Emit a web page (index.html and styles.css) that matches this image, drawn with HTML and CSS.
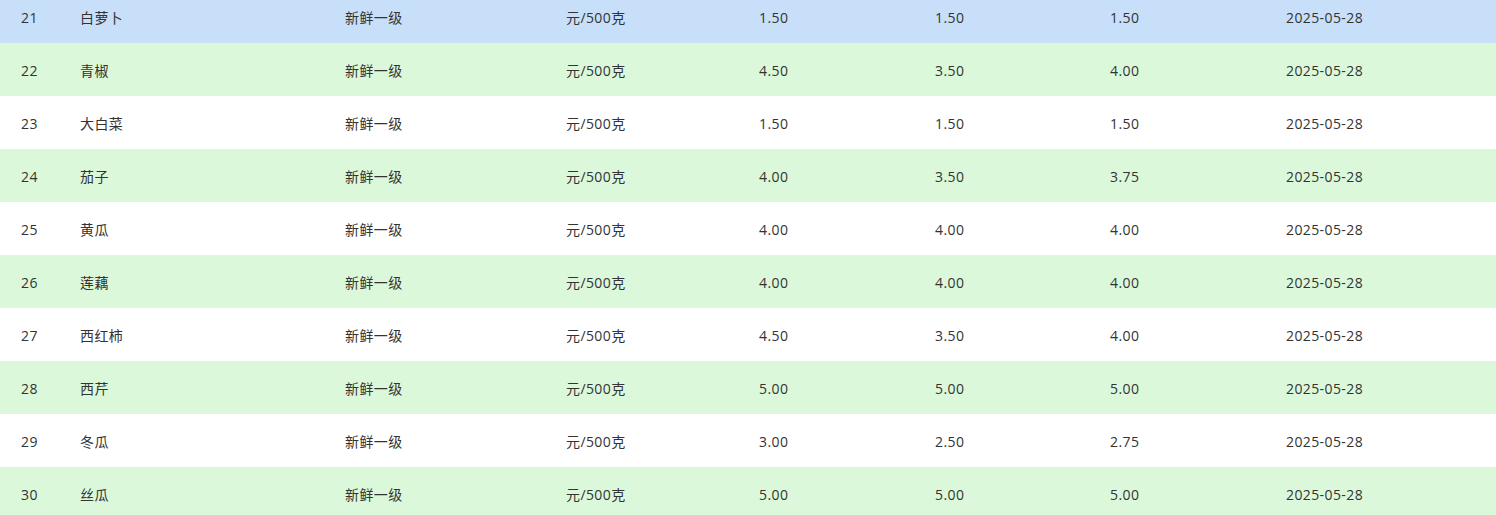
FILE: index.html
```html
<!DOCTYPE html>
<html lang="zh">
<head>
<meta charset="utf-8">
<title>蔬菜价格</title>
<link rel="stylesheet" href="styles.css">
</head>
<body>
<div class="viewport">
  <div class="table">
    <div class="row selected"><span>21</span><span>白萝卜</span><span>新鲜一级</span><span>元/500克</span><span>1.50</span><span>1.50</span><span>1.50</span><span>2025-05-28</span></div>
    <div class="row alt"><span>22</span><span>青椒</span><span>新鲜一级</span><span>元/500克</span><span>4.50</span><span>3.50</span><span>4.00</span><span>2025-05-28</span></div>
    <div class="row"><span>23</span><span>大白菜</span><span>新鲜一级</span><span>元/500克</span><span>1.50</span><span>1.50</span><span>1.50</span><span>2025-05-28</span></div>
    <div class="row alt"><span>24</span><span>茄子</span><span>新鲜一级</span><span>元/500克</span><span>4.00</span><span>3.50</span><span>3.75</span><span>2025-05-28</span></div>
    <div class="row"><span>25</span><span>黄瓜</span><span>新鲜一级</span><span>元/500克</span><span>4.00</span><span>4.00</span><span>4.00</span><span>2025-05-28</span></div>
    <div class="row alt"><span>26</span><span>莲藕</span><span>新鲜一级</span><span>元/500克</span><span>4.00</span><span>4.00</span><span>4.00</span><span>2025-05-28</span></div>
    <div class="row"><span>27</span><span>西红柿</span><span>新鲜一级</span><span>元/500克</span><span>4.50</span><span>3.50</span><span>4.00</span><span>2025-05-28</span></div>
    <div class="row alt"><span>28</span><span>西芹</span><span>新鲜一级</span><span>元/500克</span><span>5.00</span><span>5.00</span><span>5.00</span><span>2025-05-28</span></div>
    <div class="row"><span>29</span><span>冬瓜</span><span>新鲜一级</span><span>元/500克</span><span>3.00</span><span>2.50</span><span>2.75</span><span>2025-05-28</span></div>
    <div class="row alt"><span>30</span><span>丝瓜</span><span>新鲜一级</span><span>元/500克</span><span>5.00</span><span>5.00</span><span>5.00</span><span>2025-05-28</span></div>
  </div>
</div>
</body>
</html>
```

FILE: styles.css
```css
html, body {
  margin: 0;
  padding: 0;
  background: #ffffff;
}
body {
  font-family: "Open Sans", "Noto Sans CJK SC", sans-serif;
  font-size: 14px;
  color: #333333;
  overflow: hidden;
}
.viewport {
  height: 515px;
  overflow: hidden;
}
.table {
  margin-top: -10px;
}
.row {
  box-sizing: border-box;
  display: grid;
  grid-template-columns: 59px 265px 221px 193px 176px 175px 176px 1fr;
  align-items: center;
  height: 53px;
  padding-left: 21px;
  padding-top: 2px;
  background: #ffffff;
}
.row.alt {
  background: #dbf9da;
}
.row.selected {
  background: #c8dff9;
}
.row span {
  white-space: nowrap;
  line-height: 20px;
  letter-spacing: 0.4px;
}
```
